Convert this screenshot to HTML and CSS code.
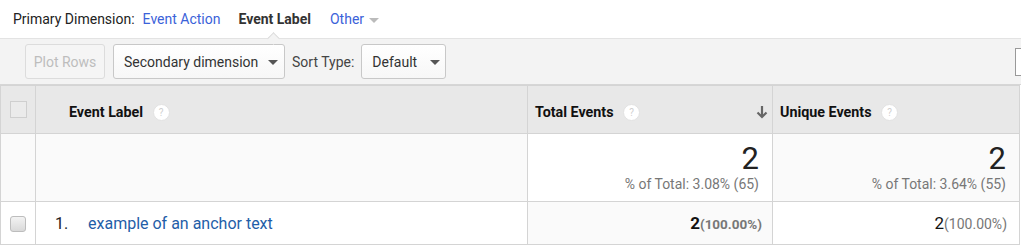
FILE: index.html
```html
<!DOCTYPE html>
<html>

<head>
    <meta charset="UTF-8">
    <title>Event Label report</title>
    <link rel="stylesheet" href="styles.css">
</head>

<body>
    <div class="primary-bar">
        <span class="primary-title">Primary Dimension:</span>
        <a class="dim-link">Event Action</a>
        <span class="dim-current">Event Label<span class="notch"></span></span>
        <a class="dim-link dim-other">Other <span class="caret light"></span></a>
    </div>

    <div class="toolbar">
        <button class="btn disabled">Plot Rows</button>
        <button class="btn select secondary">Secondary dimension <span class="caret"></span></button>
        <span class="sort-label">Sort Type:</span>
        <button class="btn select sort">Default <span class="caret"></span></button>
        <div class="edge-box"></div>
    </div>

    <table class="report">
        <colgroup>
            <col class="c-check">
            <col class="c-label">
            <col class="c-total">
            <col class="c-unique">
        </colgroup>
        <thead>
            <tr>
                <th class="check-cell"><span class="check head"></span></th>
                <th class="label-head">Event Label <span class="help">?</span></th>
                <th class="metric-head sorted">Total Events <span class="help">?</span>
                    <svg class="sort-arrow" width="12" height="14" viewBox="0 0 12 14">
                        <path d="M6 1 V12 M1.5 7.5 L6 12 L10.5 7.5" fill="none" stroke="#666" stroke-width="2.2"/>
                    </svg>
                </th>
                <th class="metric-head">Unique Events <span class="help">?</span></th>
            </tr>
        </thead>
        <tbody>
            <tr class="summary">
                <td></td>
                <td></td>
                <td class="num sorted">
                    <div class="big">2</div>
                    <div class="pct">% of Total: 3.08% (65)</div>
                </td>
                <td class="num">
                    <div class="big">2</div>
                    <div class="pct">% of Total: 3.64% (55)</div>
                </td>
            </tr>
            <tr class="data">
                <td class="check-cell"><span class="check"></span></td>
                <td><span class="row-num">1.</span><a class="row-link">example of an anchor text</a></td>
                <td class="num sorted"><b class="val">2</b><span class="share bold">(100.00%)</span></td>
                <td class="num"><span class="val">2</span><span class="share">(100.00%)</span></td>
            </tr>
        </tbody>
    </table>
</body>

</html>
```

FILE: styles.css
```css
body {
    margin: 0;
    font-family: Roboto, "Liberation Sans", Arial, sans-serif;
    color: #222;
    background-color: #fff;
    overflow: hidden;
}

.primary-bar {
    display: flex;
    align-items: center;
    height: 38px;
    padding-left: 13px;
    font-size: 14px;
    border-bottom: 1px solid #e3e3e3;
}

.primary-title {
    margin-right: 8px;
}

.dim-link {
    color: #3b62d9;
    margin-right: 18px;
}

.dim-current {
    position: relative;
    font-weight: bold;
    color: #333;
    margin-right: 19px;
}

.notch {
    position: absolute;
    left: 31px;
    top: 23px;
    width: 8px;
    height: 8px;
    background-color: #f3f3f3;
    border-top: 1px solid #dcdcdc;
    border-left: 1px solid #dcdcdc;
    transform: rotate(45deg);
}

.caret {
    display: inline-block;
    width: 0;
    height: 0;
    border-left: 5px solid transparent;
    border-right: 5px solid transparent;
    border-top: 5px solid #555;
    vertical-align: middle;
    margin-left: 9px;
}

.caret.light {
    border-top-color: #bbb;
    margin-left: 1px;
}

.toolbar {
    display: flex;
    align-items: center;
    height: 45px;
    padding-left: 25px;
    background-color: #f3f3f3;
    border-bottom: 1px solid #d6d6d6;
    overflow: hidden;
}

.btn {
    height: 35px;
    padding: 0 10px;
    font-family: inherit;
    font-size: 14px;
    color: #333;
    white-space: nowrap;
    background: linear-gradient(#fff, #f7f7f7);
    border: 1px solid #c8c8c8;
    border-radius: 3px;
    margin-right: 8px;
}

.btn.disabled {
    width: 80px;
    padding: 0;
    color: #bdbdbd;
    background: #f5f5f5;
    border-color: #dcdcdc;
}

.btn.secondary {
    width: 172px;
    text-align: left;
}

.btn.secondary .caret {
    margin-left: 6px;
}

.btn.sort {
    width: 85px;
    text-align: left;
}

.sort-label {
    font-size: 14px;
    color: #444;
    margin-left: -1px;
    margin-right: 7px;
}

.edge-box {
    margin-left: auto;
    margin-right: -30px;
    width: 34px;
    height: 26px;
    background-color: #fff;
    border: 1px solid #999;
}

.report {
    width: 1020px;
    border-collapse: collapse;
    table-layout: fixed;
    font-size: 14px;
}

.c-check {
    width: 35px;
}

.c-label {
    width: 492px;
}

.c-total {
    width: 245px;
}

.c-unique {
    width: 247px;
}

.report th,
.report td {
    border: 1px solid #d4d4d4;
    padding: 0;
}

.report thead th {
    height: 41px;
    padding-top: 6px;
    background-color: #e8e8e8;
    text-align: left;
    font-size: 14.3px;
    font-weight: bold;
    color: #111;
}

.report th.check-cell {
    padding-top: 0;
    height: 47px;
}

.report th.check-cell,
.report td.check-cell {
    text-align: center;
}

.label-head {
    padding-left: 33px !important;
}

.metric-head {
    position: relative;
    padding-left: 7px !important;
}

.help {
    display: inline-block;
    width: 15px;
    height: 15px;
    line-height: 15px;
    margin-left: 6px;
    border-radius: 50%;
    background-color: #fff;
    border: 1px solid #e2e2e2;
    color: #cfcfcf;
    font-size: 10px;
    font-weight: normal;
    text-align: center;
    vertical-align: middle;
}

.sort-arrow {
    position: absolute;
    right: 4px;
    top: 19px;
}

.check {
    display: inline-block;
    width: 14px;
    height: 14px;
    border: 1px solid #bdbdbd;
    border-radius: 3px;
    background: linear-gradient(#f3f3f3, #d9d9d9);
    vertical-align: middle;
}

.check.head {
    width: 15px;
    height: 15px;
    border-radius: 0;
    border-color: #cfcfcf;
    background: #ebebeb;
}

.summary td {
    height: 58px;
    background-color: #fafafa;
}

.summary td.sorted {
    background-color: #fff;
}

.num {
    text-align: right;
    padding-right: 12px !important;
}

.summary .num {
    padding-right: 13px !important;
    vertical-align: top;
    padding-top: 9px !important;
}

.big {
    font-size: 31px;
    line-height: 32px;
    color: #222;
}

.pct {
    font-size: 14px;
    line-height: 18px;
    color: #777;
}

.data td {
    height: 42px;
    font-size: 16px;
}

.data td.sorted {
    background-color: #fafafa;
    padding-right: 10px !important;
}

.row-num {
    display: inline-block;
    width: 33px;
    padding-left: 19px;
    color: #222;
}

.row-link {
    color: #1f5ea8;
}

.val {
    font-size: 17px;
    color: #111;
}

.share {
    font-size: 14px;
    color: #777;
}

.share.bold {
    font-weight: bold;
    font-size: 13.5px;
}
```
